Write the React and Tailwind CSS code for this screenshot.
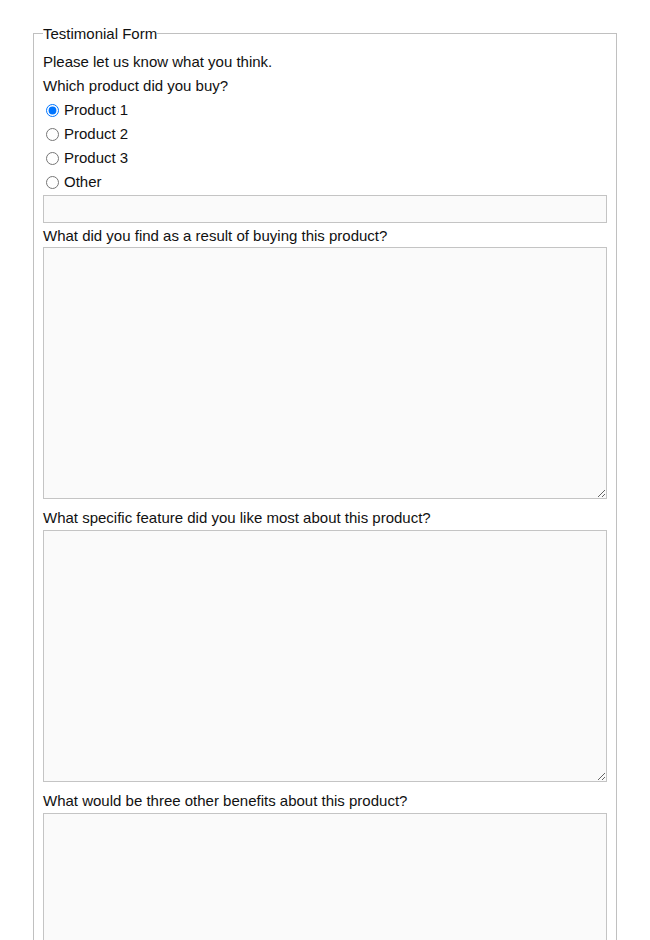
import { useState } from 'react';

// Testimonial form: one fieldset with a legend, radio group and three textareas.

const PRODUCTS = ['Product 1', 'Product 2', 'Product 3', 'Other'];

const QUESTIONS = [
  'What did you find as a result of buying this product?',
  'What specific feature did you like most about this product?',
  'What would be three other benefits about this product?',
];

export default function App() {
  const [product, setProduct] = useState('Product 1');

  return (
    <div className="min-h-screen bg-white pt-[24px] px-[33px] text-[15px] text-[#111] font-['Liberation_Sans',Arial,sans-serif]">
      <fieldset className="border border-[#c0c0c0] px-[9px] pb-[20px]">
        <legend className="p-0 leading-[19px]">Testimonial Form</legend>

        <p className="mt-[7px] leading-[24px]">Please let us know what you think.</p>
        <p className="leading-[24px]">Which product did you buy?</p>

        {PRODUCTS.map((name) => (
          <label key={name} className="flex items-center h-[24px] leading-[24px]">
            <input
              type="radio"
              name="product"
              checked={product === name}
              onChange={() => setProduct(name)}
              className="m-0 ml-[3px] mr-[5px] w-[13px] h-[13px]"
            />
            {name}
          </label>
        ))}

        <input
          type="text"
          className="block w-full h-[28px] mt-[1px] border border-[#c4c4c4] bg-[#fafafa] px-1 outline-none"
        />

        {QUESTIONS.map((q, i) => (
          <div key={q}>
            <p className={(i === 0 ? 'mt-[3px]' : 'mt-[9px]') + ' leading-[20px]'}>{q}</p>
            <textarea
              className={(i === 0 ? 'mt-[1px]' : 'mt-[2px]') + ' block w-full h-[252px] border border-[#c4c4c4] bg-[#fafafa] p-1 outline-none resize'}
            />
          </div>
        ))}
      </fieldset>
    </div>
  );
}
